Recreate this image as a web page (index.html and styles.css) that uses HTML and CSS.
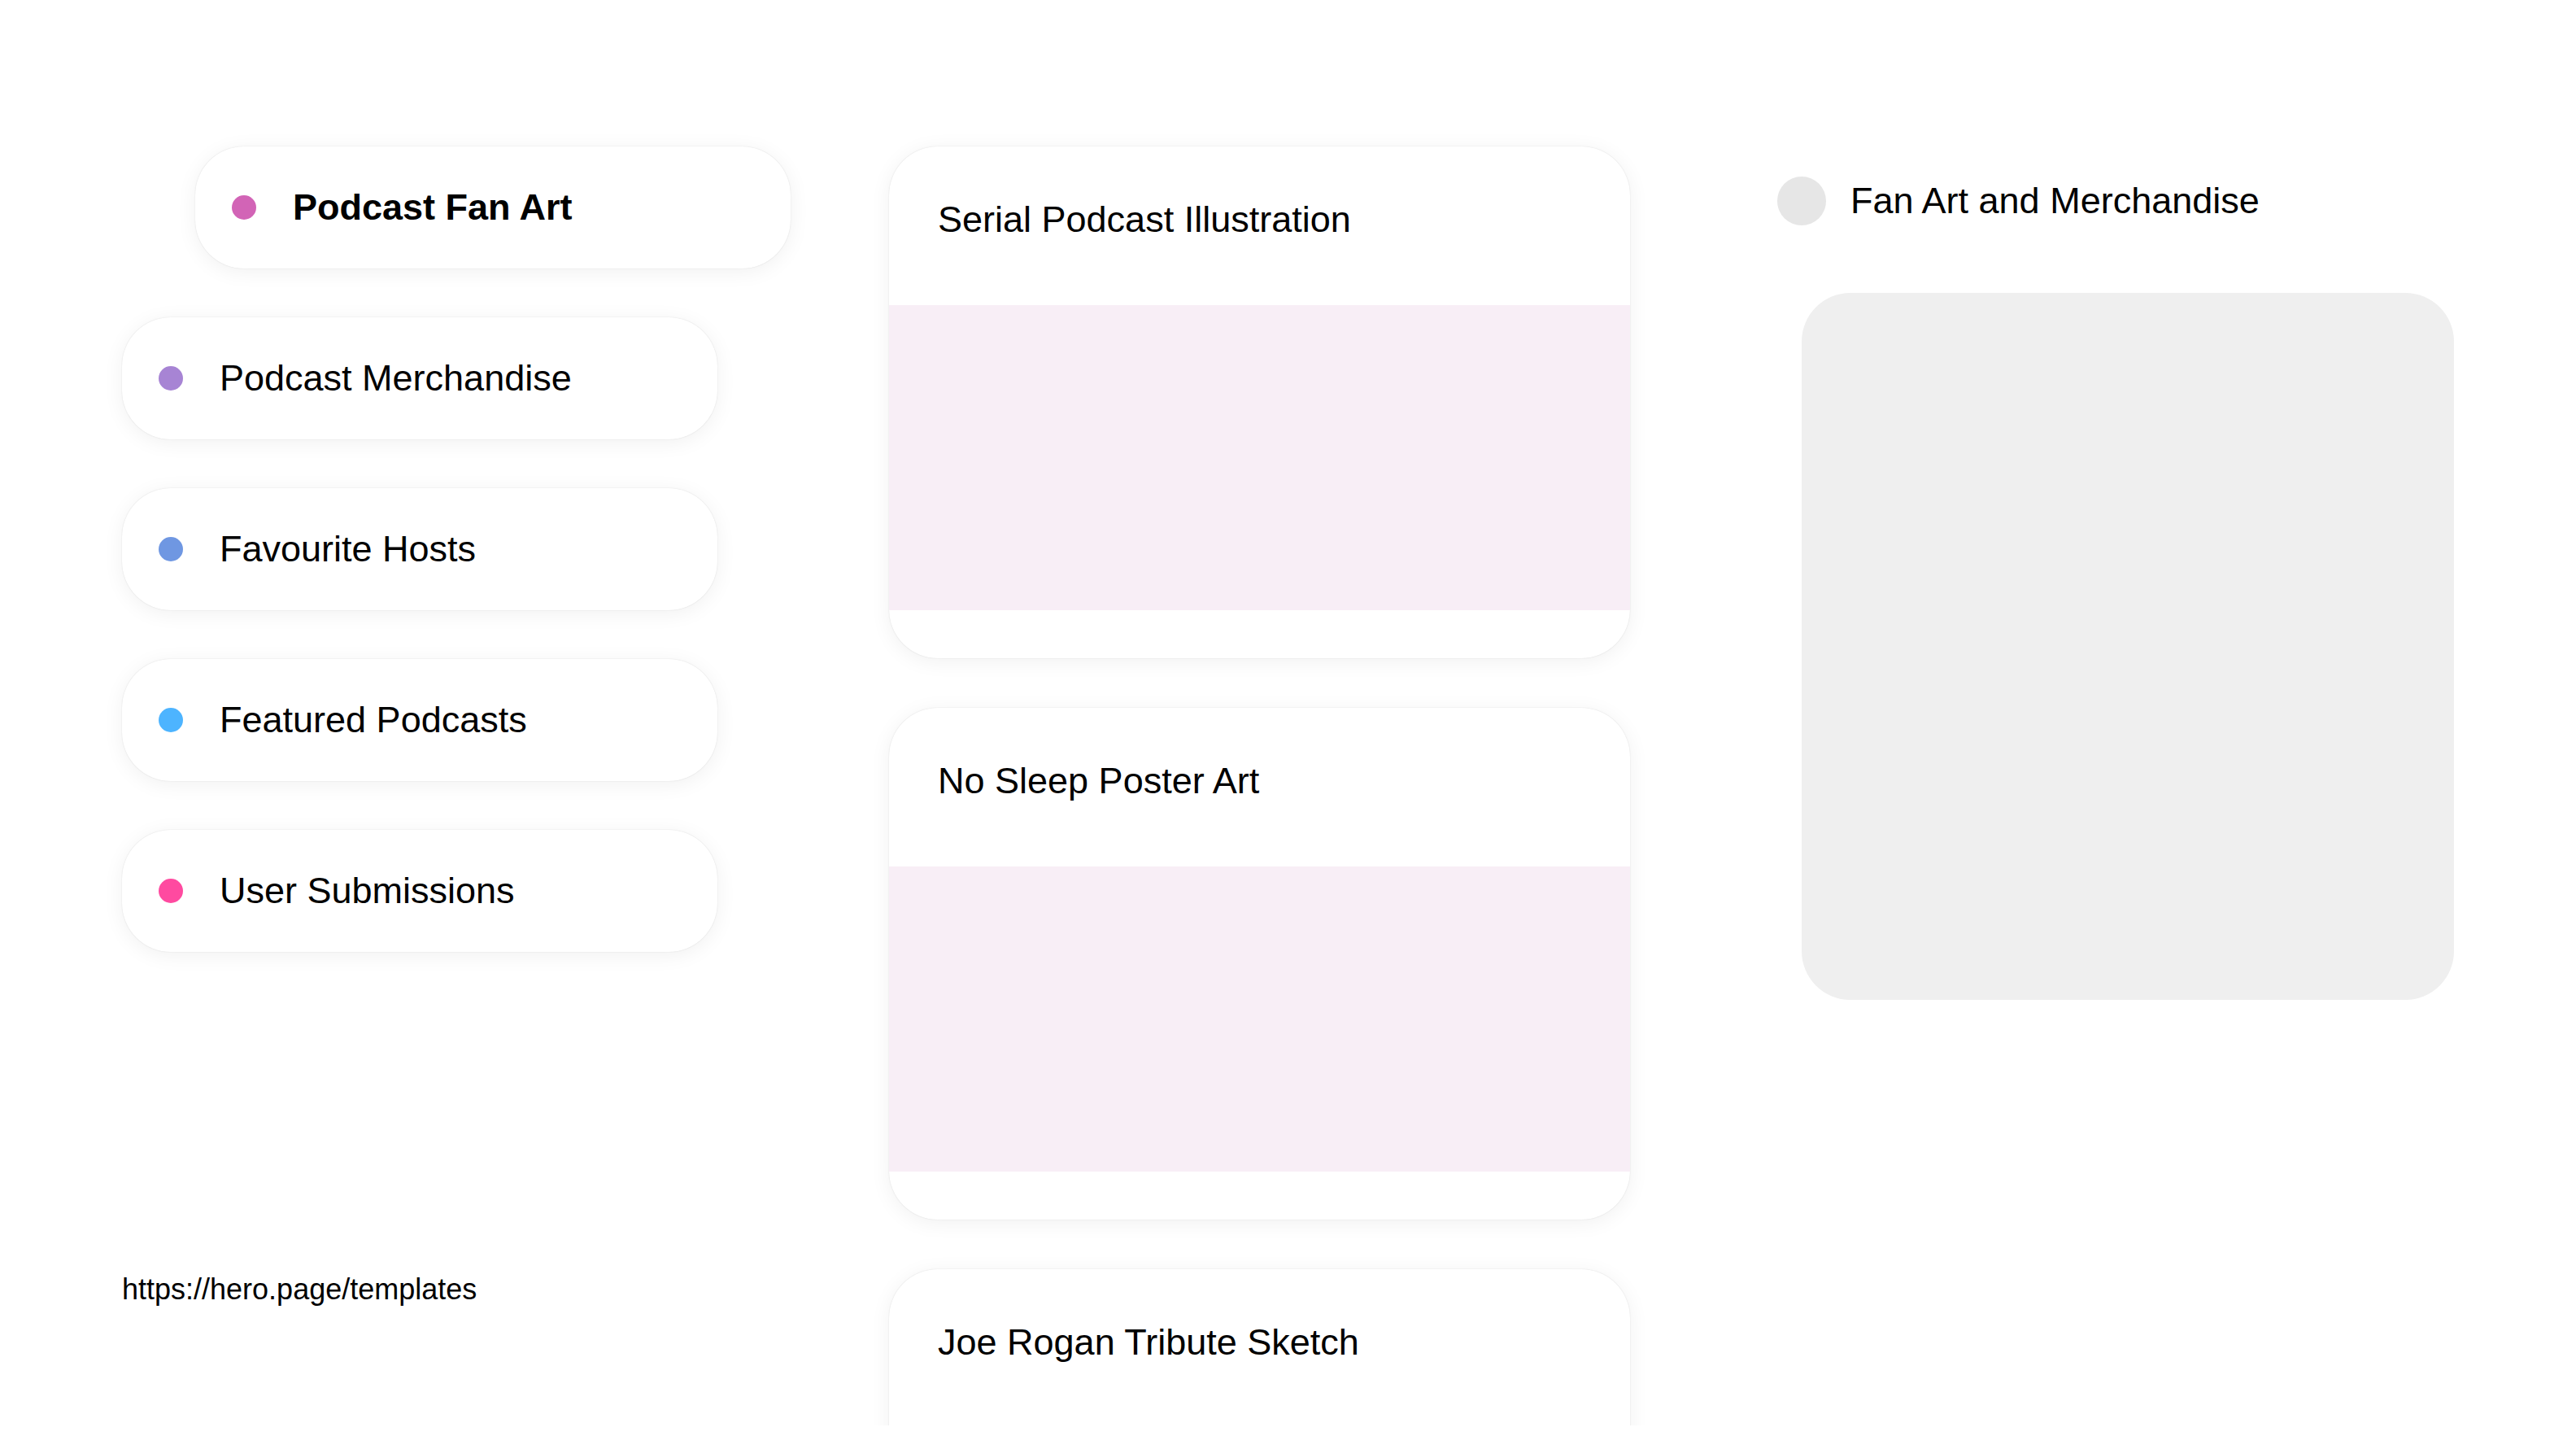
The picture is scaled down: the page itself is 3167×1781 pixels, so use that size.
FILE: index.html
```html
<!DOCTYPE html>
<html lang="en">
<head>
<meta charset="utf-8">
<title>Podcast Fan Art</title>
<link rel="stylesheet" href="styles.css">
</head>
<body>
<div class="page">
  <aside class="nav">
    <div class="pills">
      <div class="pill active"><span class="dot dot-fanart"></span><span class="pill-label">Podcast Fan Art</span></div>
      <div class="pill"><span class="dot dot-merch"></span><span class="pill-label">Podcast Merchandise</span></div>
      <div class="pill"><span class="dot dot-hosts"></span><span class="pill-label">Favourite Hosts</span></div>
      <div class="pill"><span class="dot dot-featured"></span><span class="pill-label">Featured Podcasts</span></div>
      <div class="pill"><span class="dot dot-users"></span><span class="pill-label">User Submissions</span></div>
    </div>
    <div class="url">https://hero.page/templates</div>
  </aside>

  <main class="feed">
    <article class="card">
      <div class="card-head">Serial Podcast Illustration</div>
      <div class="card-media"></div>
      <div class="card-foot"></div>
    </article>
    <article class="card">
      <div class="card-head">No Sleep Poster Art</div>
      <div class="card-media"></div>
      <div class="card-foot"></div>
    </article>
    <article class="card">
      <div class="card-head">Joe Rogan Tribute Sketch</div>
      <div class="card-media"></div>
      <div class="card-foot"></div>
    </article>
  </main>

  <section class="side">
    <div class="side-head"><span class="side-dot"></span><span class="side-title">Fan Art and Merchandise</span></div>
    <div class="side-box"></div>
  </section>
</div>
</body>
</html>
```

FILE: styles.css
```css
html, body {
  margin: 0;
  padding: 0;
  background: #ffffff;
  overflow: hidden;
}

body {
  font-family: "Liberation Sans", Arial, Helvetica, sans-serif;
  color: #000000;
}

.page {
  display: flex;
  align-items: flex-start;
  height: 1752px;
  box-sizing: border-box;
  overflow: hidden;
  padding: 180px 150px 0 150px;
}

/* Left navigation */
.nav {
  width: 732px;
  flex-shrink: 0;
  display: flex;
  flex-direction: column;
}

.pills {
  display: flex;
  flex-direction: column;
  gap: 60px;
}

.pill {
  width: 732px;
  height: 150px;
  box-sizing: border-box;
  display: flex;
  align-items: center;
  gap: 45px;
  padding-left: 45px;
  background: #ffffff;
  border-radius: 60px;
  box-shadow: 0 0 1.5px rgba(0, 0, 0, 0.14), 0 4px 26px rgba(0, 0, 0, 0.06);
  font-size: 45px;
}

.pill.active {
  margin-left: 90px;
  font-weight: bold;
}

.dot {
  width: 30px;
  height: 30px;
  border-radius: 50%;
  flex-shrink: 0;
}

.dot-fanart { background: #d264b6; }
.dot-merch { background: #a784d4; }
.dot-hosts { background: #6f97e2; }
.dot-featured { background: #4db4ff; }
.dot-users { background: #ff4aa0; }

.url {
  margin-top: 394px;
  font-size: 36px;
}

/* Middle feed */
.feed {
  width: 911px;
  flex-shrink: 0;
  margin-left: 211px;
  display: flex;
  flex-direction: column;
  gap: 61px;
}

.card {
  background: #ffffff;
  border-radius: 60px;
  overflow: hidden;
  box-shadow: 0 0 1.5px rgba(0, 0, 0, 0.14), 0 4px 26px rgba(0, 0, 0, 0.06);
}

.card-head {
  height: 195px;
  box-sizing: border-box;
  padding: 64px 60px 0 60px;
  font-size: 45px;
}

.card-media {
  height: 375px;
  background: #f8eef6;
}

.card-foot {
  height: 59px;
}

/* Right panel */
.side {
  width: 832px;
  flex-shrink: 0;
  margin-left: 181px;
  padding-top: 37px;
  display: flex;
  flex-direction: column;
}

.side-head {
  display: flex;
  align-items: center;
  gap: 30px;
  height: 60px;
}

.side-dot {
  width: 60px;
  height: 60px;
  border-radius: 50%;
  background: #e6e6e6;
  flex-shrink: 0;
}

.side-title {
  font-size: 45px;
}

.side-box {
  margin-top: 83px;
  margin-left: 30px;
  width: 802px;
  height: 869px;
  border-radius: 60px;
  background: #efefef;
}
```
